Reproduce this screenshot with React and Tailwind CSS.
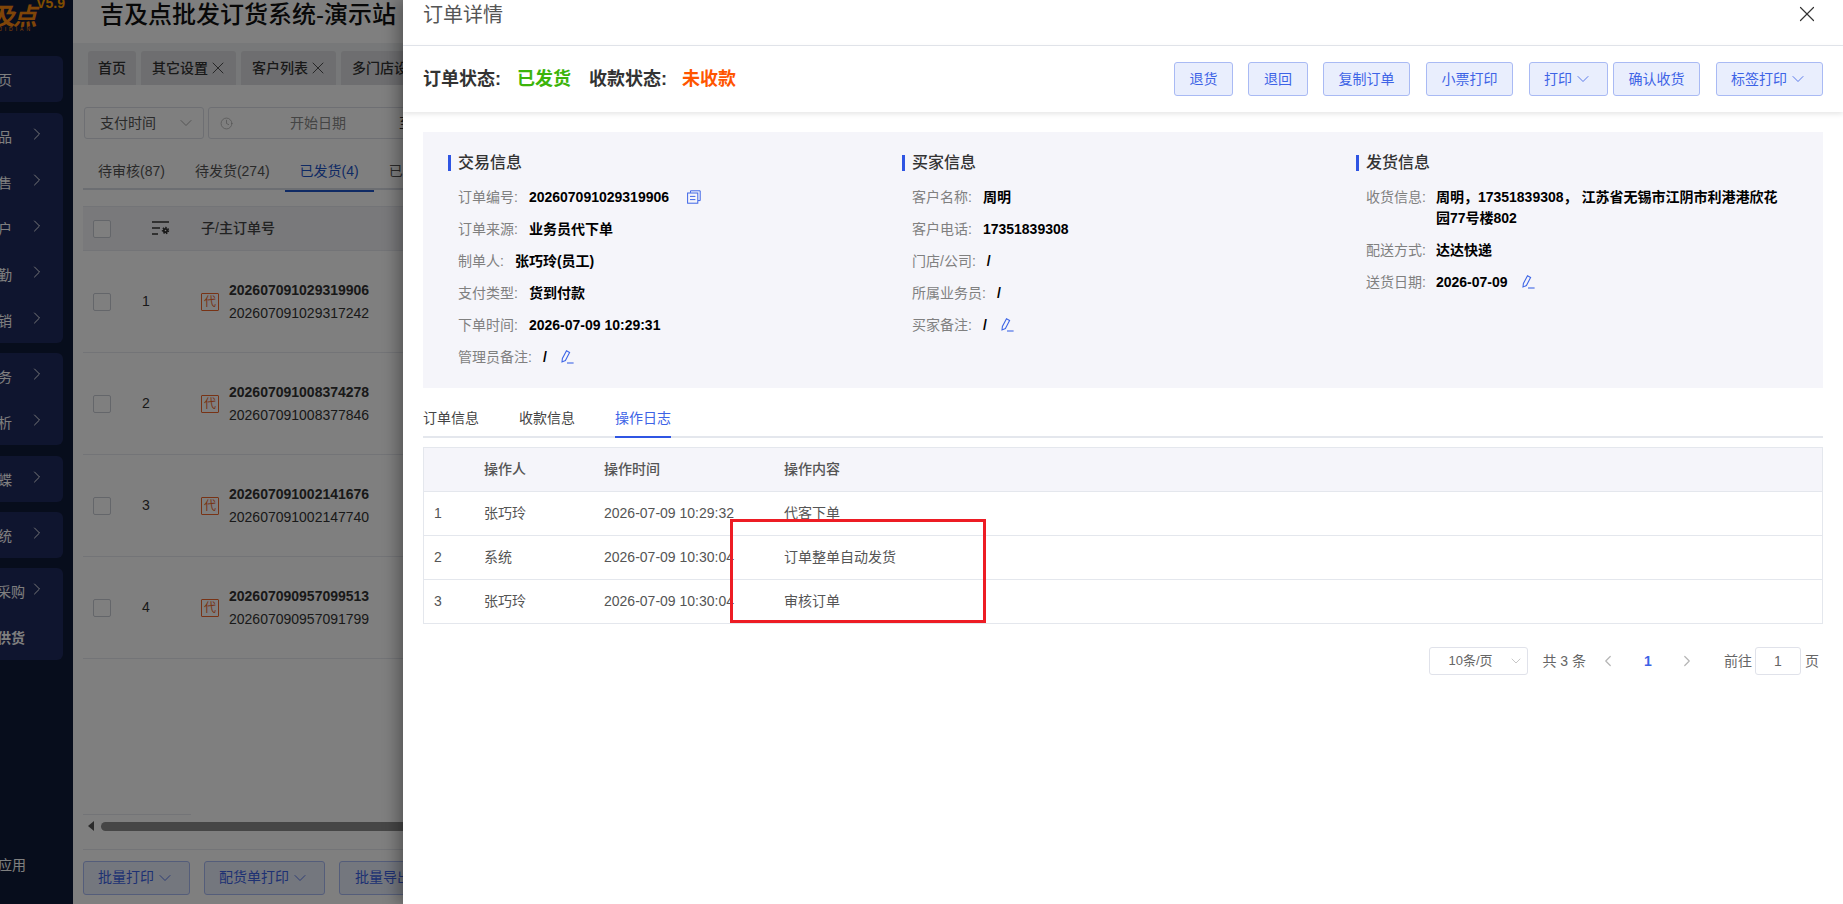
import { ChevronDown, ChevronRight, ChevronLeft, X, Clock } from "lucide-react";

const cjk = { fontFamily: '"Liberation Sans", "Noto Sans CJK SC", sans-serif' };

const menuGroups = [
  { top: "mt-[56px]", rows: [{ label: "首页", plain: true }] },
  {
    top: "mt-[11px]",
    rows: [
      { label: "商品" },
      { label: "销售" },
      { label: "客户" },
      { label: "外勤" },
      { label: "营销" },
    ],
  },
  { top: "mt-[10px]", rows: [{ label: "财务" }, { label: "分析" }] },
  { top: "mt-[11px]", rows: [{ label: "蝴蝶" }] },
  { top: "mt-[10px]", rows: [{ label: "系统" }] },
  {
    top: "mt-[10px]",
    rows: [
      { label: "集中采购", wide: true },
      { label: "联合供货", plain: true, bold: true, wide: true },
    ],
  },
];

const orders = [
  ["1", "202607091029319906", "202607091029317242"],
  ["2", "202607091008374278", "202607091008377846"],
  ["3", "202607091002141676", "202607091002147740"],
  ["4", "202607090957099513", "202607090957091799"],
];

const logs = [
  ["1", "张巧玲", "2026-07-09 10:29:32", "代客下单"],
  ["2", "系统", "2026-07-09 10:30:04", "订单整单自动发货"],
  ["3", "张巧玲", "2026-07-09 10:30:04", "审核订单"],
];

const PenIcon = () => (
  <svg width="13" height="14" viewBox="0 0 13 14" fill="none" stroke="#3f66e6" strokeWidth="1.1">
    <path d="M5.5 0.8 L8.6 2.4 L4.4 10.6 L1 12 L1.4 8.4 Z" />
    <path d="M6 13 H12.6" />
  </svg>
);

const CopyIcon = () => (
  <svg width="14" height="14" viewBox="0 0 14 14" fill="none" stroke="#3f66e6" strokeWidth="1">
    <path d="M3.5 2.8 V0.8 H13.2 V10.6 H11" />
    <rect x="0.6" y="3" width="10.2" height="10.2" />
    <path d="M3 6.4 H8.4 M3 9.6 H8.4" />
  </svg>
);

const ColumnsIcon = () => (
  <svg width="18" height="15" viewBox="0 0 18 15" fill="none" stroke="#333" strokeWidth="1.4">
    <path d="M0 1 H17 M0 7 H8 M0 13 H6" />
    <circle cx="13.5" cy="9.5" r="2.6" fill="#333" stroke="none" />
    <circle cx="13.5" cy="9.5" r="3" strokeDasharray="1.5 1.2" />
    <circle cx="13.5" cy="9.5" r="0.8" fill="#fff" stroke="none" />
  </svg>
);

const ActionBtn = ({ label, arrow, className }) => (
  <button className={`h-[34px] flex items-center justify-center rounded-[3px] border border-[#a9baf4] bg-[#e9eefd] text-[14px] font-normal text-[#3d63e6] ${className}`}>
    {label}
    {arrow && <ChevronDown size={20} strokeWidth={1} className="ml-[1px]" />}
  </button>
);

const Field = ({ label, value, edit, copy, valueGap = "ml-[11px]", className = "" }) => (
  <div className={`flex h-[32px] items-center text-[14px] ${className}`}>
    <span className="text-[#808080] whitespace-nowrap">{label}:</span>
    <span className={`${valueGap} font-bold text-black whitespace-nowrap`}>{value}</span>
    {copy && <span className="ml-[18px] flex"><CopyIcon /></span>}
    {edit && <span className="ml-[14px] flex"><PenIcon /></span>}
  </div>
);

const SectionTitle = ({ children }) => (
  <div className="flex items-center h-[16px] mb-[10px]">
    <span className="w-[3px] h-[16px] bg-[#2f55e3]" />
    <span className="ml-[7px] text-[16px] font-medium text-[#333]">{children}</span>
  </div>
);

export default function App() {
  return (
    <div style={cjk} className="relative w-[1843px] h-[904px] overflow-hidden bg-white flex">
      {/* page behind the drawer */}
      <aside className="w-[73px] h-full shrink-0 bg-[#0f1a38] overflow-hidden relative">
        <div className="absolute right-[8px] top-[-7px] text-[14px] leading-[20px] font-bold text-[#ff9a00]">V5.9</div>
        <div className="absolute right-[38px] top-[6px] text-[24px] leading-[22px] italic font-bold text-[#ff8a10] tracking-[-2px] whitespace-nowrap">吉及点</div>
        <div className="absolute right-[40px] top-[28px] text-[5px] leading-[3px] tracking-[3px] text-[#ff8a10] whitespace-nowrap">JIJIDIAN</div>
        <div className="flex flex-col pr-[10px]">
          {menuGroups.map((g, i) => (
            <div key={i} className={`${g.top} rounded-r-[6px] bg-[#1f2a5e]`}>
              {g.rows.map((r) => (
                <div key={r.label} className="h-[46px] flex items-center justify-end text-[14px] text-white relative">
                  <span className={`absolute whitespace-nowrap ${r.wide ? "right-[38px]" : "right-[51px]"} ${r.bold ? "font-bold" : ""} translate-y-[1px]`}>
                    {r.label}
                  </span>
                  {!r.plain && <ChevronRight size={20} strokeWidth={1.1} className="absolute right-[16px] -translate-y-[2px]" />}
                </div>
              ))}
            </div>
          ))}
        </div>
        <span className="absolute right-[47px] top-[855px] text-[14px] text-white whitespace-nowrap">全部应用</span>
      </aside>

      <main className="flex-1 min-w-0 flex flex-col">
        <div className="h-[43px] flex items-center pl-[27px] text-[24px] font-medium text-[#111] shrink-0 pb-[13px]">吉及点批发订货系统-演示站</div>
        <div className="h-[42px] bg-[#eef0f2] flex items-end gap-[5px] pl-[15px] shrink-0 text-[14px] text-[#333] font-medium">
          <div className="h-[34px] w-[48px] rounded-t-[3px] bg-[#dcdde0] flex items-center justify-center">首页</div>
          <div className="h-[34px] w-[95px] rounded-t-[3px] bg-[#dcdde0] flex items-center pl-[11px]">其它设置<X size={20} strokeWidth={1} className="shrink-0" /></div>
          <div className="h-[34px] w-[95px] rounded-t-[3px] bg-[#dcdde0] flex items-center pl-[11px]">客户列表<X size={20} strokeWidth={1} className="shrink-0" /></div>
          <div className="h-[34px] w-[95px] rounded-t-[3px] bg-[#dcdde0] flex items-center pl-[11px] whitespace-nowrap">多门店设置</div>
        </div>

        <div className="pl-[10px] flex-1 min-h-0 flex flex-col">
          <div className="mt-[22px] ml-[1px] flex gap-[4px] shrink-0">
            <div className="w-[120px] h-[32px] rounded-[3px] border border-[#dcdfe6] flex items-center justify-between pl-[15px] pr-[7px] text-[14px] text-[#555]">
              支付时间<ChevronDown size={20} strokeWidth={1} className="text-[#999]" />
            </div>
            <div className="w-[400px] h-[32px] rounded-[3px] border border-[#dcdfe6] flex items-center pl-[11px] text-[14px] text-[#888]">
              <Clock size={13} strokeWidth={1.4} className="text-[#aaa]" />
              <span className="ml-[57px]">开始日期</span>
              <span className="ml-[53px] text-[#333]">至</span>
            </div>
          </div>

          <div className="mt-[13px] h-[38px] border-b-2 border-[#d8dce4] flex text-[14px] text-[#555] shrink-0">
            <div className="px-[15px] flex items-center h-[38px]">待审核(87)</div>
            <div className="px-[15px] flex items-center h-[38px]">待发货(274)</div>
            <div className="px-[15px] flex items-center h-[38px] text-[#1e55c8] border-b-2 border-[#1e55c8] box-content">已发货(4)</div>
            <div className="px-[15px] flex items-center h-[38px] whitespace-nowrap">已完成</div>
          </div>

          <div className="mt-[16px] h-[45px] bg-[#f2f3f7] border-y border-[#e6e8ee] flex items-center text-[14px] text-[#444] font-medium shrink-0">
            <span className="ml-[10px] w-[18px] h-[18px] rounded-[2px] border border-[#c8ccd4] bg-white shrink-0" />
            <span className="ml-[41px] flex"><ColumnsIcon /></span>
            <span className="ml-[31px] whitespace-nowrap">子/主订单号</span>
          </div>

          <div className="shrink-0">
            {orders.map(([n, main, sub]) => (
              <div key={n} className="h-[102px] border-b border-[#e6e8ee] flex items-center text-[14px] text-[#333]">
                <span className="ml-[10px] w-[18px] h-[18px] rounded-[2px] border border-[#c8ccd4] bg-white shrink-0" />
                <span className="ml-[31px] w-[59px]">{n}</span>
                <span className="w-[18px] h-[18px] border border-[#f0662a] rounded-[1px] text-[12px] text-[#f0662a] flex items-center justify-center shrink-0">代</span>
                <div className="ml-[10px] flex flex-col leading-[23px]">
                  <span className="font-bold">{main}</span>
                  <span>{sub}</span>
                </div>
              </div>
            ))}
          </div>

          <div className="flex-1 min-h-0" />
          <div className="h-[22px] mb-[12px] flex items-center shrink-0 relative">
            <span className="absolute top-[-1px] left-0 w-[108px] h-px bg-[#e6e8ee]" />
            <span className="ml-[5px] w-0 h-0 border-y-[5px] border-y-transparent border-r-[6px] border-r-[#555]" />
            <span className="ml-[7px] w-[400px] h-[9px] rounded-full bg-[#8c8c8c]" />
          </div>
          <div className="h-[55px] border-t border-[#e6e8ee] flex items-center gap-[14px] shrink-0 pt-[1px]">
            <button className="w-[107px] h-[34px] rounded-[3px] border border-[#a9baf4] bg-[#e9eefd] text-[14px] text-[#3d63e6] flex items-center justify-center gap-[1px] shrink-0">批量打印<ChevronDown size={20} strokeWidth={1} /></button>
            <button className="w-[121px] h-[34px] rounded-[3px] border border-[#a9baf4] bg-[#e9eefd] text-[14px] text-[#3d63e6] flex items-center justify-center gap-[1px] shrink-0">配货单打印<ChevronDown size={20} strokeWidth={1} /></button>
            <button className="w-[107px] h-[34px] rounded-[3px] border border-[#a9baf4] bg-[#e9eefd] text-[14px] text-[#3d63e6] flex items-center pl-[15px] shrink-0 whitespace-nowrap">批量导出</button>
          </div>
        </div>
      </main>

      {/* dim layer */}
      <div className="absolute inset-0 bg-black/50" />

      {/* order detail drawer */}
      <section className="absolute top-0 right-0 bottom-0 w-[1440px] bg-white shadow-[-6px_0_14px_rgba(0,0,0,0.3)] flex flex-col">
        <div className="h-[46px] shrink-0 border-b border-[#e4e7ed] flex items-center justify-between pl-[20px] pr-[23px] pb-[16px] pt-[1px]">
          <span className="text-[20px] leading-[30px] text-[#555]">订单详情</span>
          <X size={26} strokeWidth={1.1} className="text-[#333] -translate-y-[1px]" />
        </div>

        <div className="h-[66px] shrink-0 shadow-[0_2px_5px_rgba(0,0,0,0.1)] flex items-center pl-[20px] pr-[20px] text-[18px] font-bold">
          <span className="text-[#333]">订单状态:</span>
          <span className="ml-[16px] text-[#3cb40a]">已发货</span>
          <span className="ml-[18px] text-[#333]">收款状态:</span>
          <span className="ml-[15px] text-[#ff5500]">未收款</span>
          <div className="ml-auto flex items-center">
            <ActionBtn label="退货" className="w-[59px]" />
            <ActionBtn label="退回" className="w-[60px] ml-[15px]" />
            <ActionBtn label="复制订单" className="w-[87px] ml-[15px]" />
            <ActionBtn label="小票打印" className="w-[87px] ml-[16px]" />
            <ActionBtn label="打印" arrow className="w-[79px] ml-[16px]" />
            <ActionBtn label="确认收货" className="w-[87px] ml-[5px]" />
            <ActionBtn label="标签打印" arrow className="w-[107px] ml-[16px]" />
          </div>
        </div>

        <div className="mt-[20px] mx-[20px] h-[256px] shrink-0 bg-[#f5f5fa] pl-[25px] pt-[23px] grid grid-cols-[454px_454px_1fr]">
          <div>
            <SectionTitle>交易信息</SectionTitle>
            <div className="pl-[10px]">
              <Field label="订单编号" value="202607091029319906" copy />
              <Field label="订单来源" value="业务员代下单" />
              <Field label="制单人" value="张巧玲(员工)" />
              <Field label="支付类型" value="货到付款" />
              <Field label="下单时间" value="2026-07-09 10:29:31" />
              <Field label="管理员备注" value="/" edit />
            </div>
          </div>
          <div>
            <SectionTitle>买家信息</SectionTitle>
            <div className="pl-[10px]">
              <Field label="客户名称" value="周明" />
              <Field label="客户电话" value="17351839308" />
              <Field label="门店/公司" value="/" />
              <Field label="所属业务员" value="/" />
              <Field label="买家备注" value="/" edit />
            </div>
          </div>
          <div>
            <SectionTitle>发货信息</SectionTitle>
            <div className="pl-[10px]">
              <div className="flex text-[14px] leading-[21px] pt-[6px] pb-[5px]">
                <span className="text-[#808080] whitespace-nowrap">收货信息:</span>
                <span className="ml-[10px] w-[345px] font-bold text-black">周明，17351839308， 江苏省无锡市江阴市利港港欣花园77号楼802</span>
              </div>
              <Field label="配送方式" value="达达快递" valueGap="ml-[10px]" />
              <Field label="送货日期" value="2026-07-09" edit valueGap="ml-[10px]" />
            </div>
          </div>
        </div>

        <div className="mt-[18px] mx-[20px] h-[32px] shrink-0 border-b-2 border-[#e4e7ed] flex gap-[40px] text-[14px] text-[#444]">
          <span className="h-[32px] leading-[24px]">订单信息</span>
          <span className="h-[32px] leading-[24px]">收款信息</span>
          <span className="h-[32px] leading-[24px] text-[#3d63e6] border-b-2 border-[#2f55e3]">操作日志</span>
        </div>

        <div className="relative mt-[9px] mx-[20px] shrink-0 border border-[#e4e7ed] text-[14px] text-[#555]">
          <div className="h-[44px] bg-[#f5f5fa] border-b border-[#e4e7ed] flex items-center font-medium">
            <span className="ml-[60px] w-[120px]">操作人</span>
            <span className="w-[180px]">操作时间</span>
            <span>操作内容</span>
          </div>
          {logs.map(([n, who, time, what], i) => (
            <div key={n} className={`flex items-center ${i < logs.length - 1 ? "h-[44px] border-b border-[#e4e7ed]" : "h-[43px]"}`}>
              <span className="ml-[10px] w-[50px]">{n}</span>
              <span className="w-[120px]">{who}</span>
              <span className="w-[180px] whitespace-nowrap">{time}</span>
              <span>{what}</span>
            </div>
          ))}
          {/* annotation on the screenshot */}
          <div className="absolute left-[306px] top-[71px] w-[256px] h-[104px] border-[3px] border-[#ed1c24]" />
        </div>

        <div className="mt-[23px] mr-[24px] h-[28px] shrink-0 flex items-center justify-end text-[14px] text-[#666]">
          <div className="w-[99px] h-[28px] rounded-[3px] border border-[#e0e2ea] flex items-center justify-between pl-[18px] pr-[3px] text-[13px]">
            10条/页<ChevronDown size={16} strokeWidth={1} className="text-[#aaa]" />
          </div>
          <span className="ml-[14px]">共 3 条</span>
          <ChevronLeft size={18} strokeWidth={1.6} className="ml-[13px] text-[#b5b5b5]" />
          <span className="ml-[26px] w-[10px] text-center font-bold text-[#3d63e6]">1</span>
          <ChevronRight size={18} strokeWidth={1.6} className="ml-[25px] text-[#b5b5b5]" />
          <span className="ml-[28px]">前往</span>
          <div className="ml-[3px] w-[46px] h-[28px] rounded-[3px] border border-[#e0e2ea] flex items-center justify-center">1</div>
          <span className="ml-[4px]">页</span>
        </div>
      </section>
    </div>
  );
}
